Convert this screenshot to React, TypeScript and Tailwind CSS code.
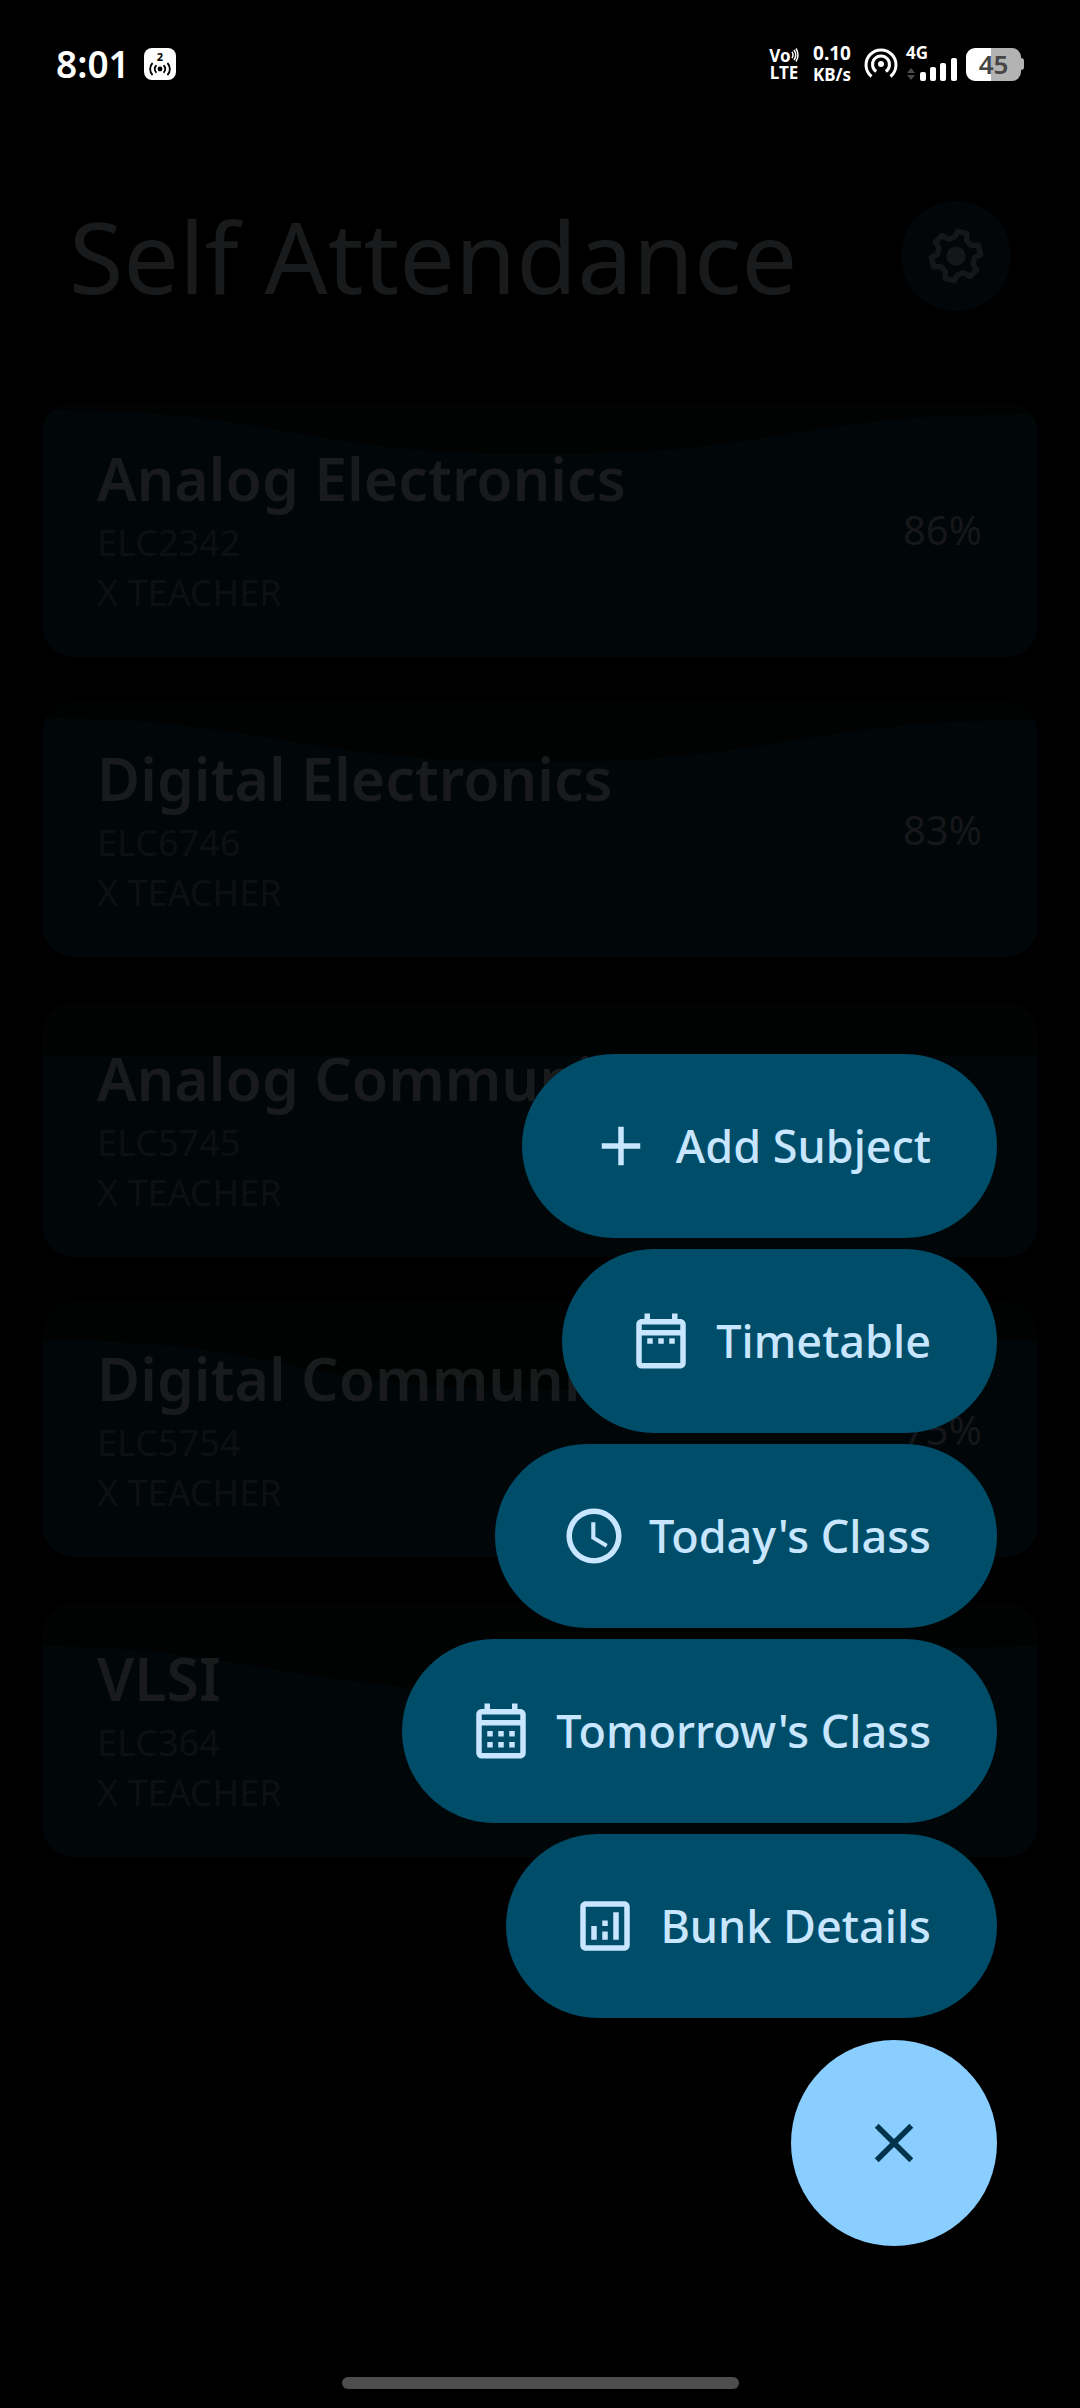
import type { IconType } from "react-icons";
import {
  MdAdd,
  MdClose,
  MdOutlineAnalytics,
  MdOutlineCalendarMonth,
  MdOutlineDateRange,
  MdOutlineSchedule,
} from "react-icons/md";

interface Subject {
  name: string;
  code: string;
  teacher: string;
  attendance: number;
  wave: string;
}

interface MenuAction {
  label: string;
  icon: IconType;
}

const subjects: Subject[] = [
  {
    name: "Analog Electronics",
    code: "ELC2342",
    teacher: "X TEACHER",
    attendance: 86,
    wave: "M0 8C250 8 250 52 500 52S750 12 1000 12V255H0Z",
  },
  {
    name: "Digital Electronics",
    code: "ELC6746",
    teacher: "X TEACHER",
    attendance: 83,
    wave: "M0 16C220 16 260 60 500 60S760 18 1000 18V255H0Z",
  },
  {
    name: "Analog Communication",
    code: "ELC5745",
    teacher: "X TEACHER",
    attendance: 79,
    wave: "M0 53H1000V255H0Z",
  },
  {
    name: "Digital Communication",
    code: "ELC5754",
    teacher: "X TEACHER",
    attendance: 75,
    wave: "M0 38C250 38 250 88 500 88S750 38 1000 38V255H0Z",
  },
  {
    name: "VLSI",
    code: "ELC364",
    teacher: "X TEACHER",
    attendance: 75,
    wave: "M0 44C200 44 250 90 500 90S750 44 1000 44V255H0Z",
  },
];

const actions: MenuAction[] = [
  { label: "Add Subject", icon: MdAdd },
  { label: "Timetable", icon: MdOutlineDateRange },
  { label: "Today's Class", icon: MdOutlineSchedule },
  { label: "Tomorrow's Class", icon: MdOutlineCalendarMonth },
  { label: "Bunk Details", icon: MdOutlineAnalytics },
];

const HotspotBadge = () => (
  <div className="flex h-8 w-8 flex-col items-center rounded-lg bg-white text-black">
    <span className="mt-1 text-[11px] leading-[10px] font-bold">2</span>
    <svg viewBox="0 0 24 14" className="h-[14px] w-6" fill="none" stroke="currentColor" strokeWidth="1.8">
      <circle cx="12" cy="7" r="2.4" fill="currentColor" stroke="none" />
      <path d="M8.5 3.2a5 5 0 0 0 0 7.6M15.5 3.2a5 5 0 0 1 0 7.6M4.6 1a8.5 8.5 0 0 0 0 12M19.4 1a8.5 8.5 0 0 1 0 12" />
    </svg>
  </div>
);

const StatusBar = () => (
  <div className="flex h-[128px] items-center justify-between pr-14 pl-14 text-white">
    <div className="flex items-center gap-4">
      <span className="w-[72px] text-[37px] leading-[40px] font-semibold">8:01</span>
      <HotspotBadge />
    </div>

    <div className="flex items-center">
      <div className="mr-3 flex w-8 flex-col items-center font-bold">
        <span className="flex items-center text-[17px] leading-[17px]">
          Vo
          <svg viewBox="0 0 8 14" className="h-[14px] w-2" fill="none" stroke="currentColor" strokeWidth="1.5">
            <path d="M1 4q2 3 0 6M3 2q3.5 5 0 10M5 .5q4 6.5 0 13" />
          </svg>
        </span>
        <span className="text-[17px] leading-[18px]">LTE</span>
      </div>
      <div className="mr-3 flex w-10 flex-col items-center font-bold">
        <span className="text-[19px] leading-[21px]">0.10</span>
        <span className="text-[17px] leading-[21px]">KB/s</span>
      </div>
      <svg viewBox="0 0 34 34" className="mr-2 h-[34px] w-[34px]" fill="none" stroke="currentColor" strokeWidth="3">
        <circle cx="17" cy="17" r="3" fill="currentColor" stroke="none" />
        <path d="M12.2 24.500a8.500 8.500 0 1 1 9.600 0M7.500 29.500a15 15 0 1 1 19 0" />
      </svg>
      <div className="relative mr-2 h-[34px] w-[52px]">
        <span className="absolute top-0 left-0 text-[17px] leading-3 font-bold">4G</span>
        <svg viewBox="0 0 52 34" className="h-full w-full" fill="currentColor">
          <path d="M5 21l4 5H1zM1 28h8l-4 5z" fill="#4a4a4a" />
          <rect x="14" y="25" width="6" height="9" rx="2" />
          <rect x="24" y="20" width="6" height="14" rx="2" />
          <rect x="34" y="16" width="6" height="18" rx="2" />
          <rect x="45" y="11" width="6" height="23" rx="2" />
        </svg>
      </div>
      <div className="flex items-center">
        <div className="flex h-[33px] w-[55px] items-center justify-center rounded-[9px] bg-linear-to-r from-white from-45% to-[#b3b3b3] to-45% text-[26px] leading-8 font-semibold text-[#454545]">
          45
        </div>
        <div className="h-3 w-[3px] rounded-r-full bg-[#b3b3b3]" />
      </div>
    </div>
  </div>
);

const SubjectCard = ({ subject }: { subject: Subject }) => (
  <article className="relative flex h-[255px] items-center justify-between overflow-hidden rounded-[32px] bg-[#010303] pr-14 pl-[55px]">
    {/* Attendance level */}
    <svg
      viewBox="0 0 1000 255"
      preserveAspectRatio="none"
      className="absolute inset-0 h-full w-full"
      aria-hidden="true"
    >
      <path d={subject.wave} fill="#010609" />
    </svg>
    <div className="relative">
      <h2 className="mb-1 text-[59px] leading-[72px] font-semibold text-[#191a1b]">{subject.name}</h2>
      <p className="text-[36px] leading-[50px] text-[#0d1012]">{subject.code}</p>
      <p className="text-[36px] leading-[50px] text-[#0d1012]">{subject.teacher}</p>
    </div>
    <span className="relative text-[40px] leading-[50px] text-[#15171a]">
      {subject.attendance}%
    </span>
  </article>
);

export default function App() {
  return (
    <div className="relative flex min-h-screen flex-col bg-black font-['Noto_Sans',sans-serif]">
      <StatusBar />

      <header className="mt-[73px] flex h-[110px] items-center justify-between px-[69px]">
        <h1 className="text-[99px] leading-[110px] text-[#191a1b]">Self Attendance</h1>
        <button
          type="button"
          aria-label="Settings"
          className="flex h-[110px] w-[110px] items-center justify-center rounded-full bg-[#020609] text-[#131719]"
        >
          <svg viewBox="0 0 24 24" className="h-[66px] w-[66px]" fill="none" stroke="currentColor" strokeWidth="2">
            <circle cx="12" cy="12" r="3.5" fill="currentColor" stroke="none" />
            <path
              transform="rotate(15 12 12)"
              strokeLinejoin="round"
              d="M10.28 3.17H13.72L14.33 5.61L16.37 6.79L18.79 6.1L20.51 9.07L18.7 10.82V13.18L20.51 14.93L18.79 17.9L16.37 17.21L14.33 18.39L13.72 20.83H10.28L9.67 18.39L7.63 17.21L5.21 17.9L3.49 14.93L5.3 13.18V10.82L3.49 9.07L5.21 6.1L7.63 6.79L9.67 5.61Z"
            />
          </svg>
        </button>
      </header>

      <main className="mt-[91px] flex flex-col gap-[45px] px-[42px]">
        {subjects.map((subject) => (
          <SubjectCard key={subject.code} subject={subject} />
        ))}
      </main>

      {/* Expanded action menu */}
      <div className="absolute right-[83px] bottom-[162px] flex flex-col items-end gap-[22px]">
        <nav className="flex flex-col items-end gap-[11px]">
          {actions.map(({ label, icon: Icon }) => (
            <button
              key={label}
              type="button"
              className="flex h-[184px] items-center gap-[22px] rounded-full bg-[#004d69] px-[66px] text-[45px] leading-[66px] font-medium text-[#c8e6ff]"
            >
              <Icon className="h-[66px] w-[66px]" />
              {label}
            </button>
          ))}
        </nav>
        <button
          type="button"
          aria-label="Close menu"
          className="flex h-[206px] w-[206px] items-center justify-center rounded-full bg-[#89ceff] text-[#00344c]"
        >
          <MdClose className="h-[66px] w-[66px]" />
        </button>
      </div>

      <div className="mx-auto mt-auto mb-[19px] h-3 w-[397px] rounded-full bg-[#4d4d4d]" />
    </div>
  );
}
